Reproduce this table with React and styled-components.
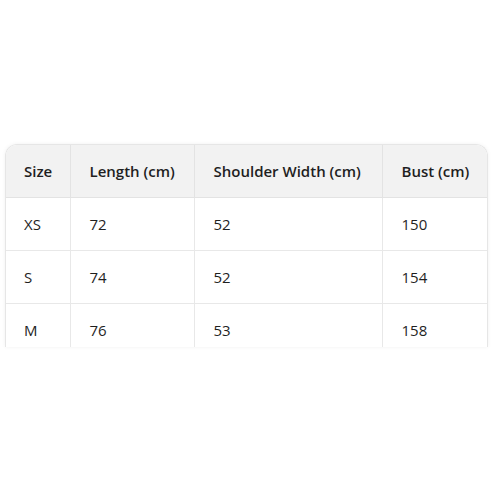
import styled, { createGlobalStyle } from 'styled-components';

const GlobalStyle = createGlobalStyle`
    html, body {
        margin: 0;
        padding: 0;
        background: #ffffff;
        font-family: 'Open Sans', 'Noto Sans', sans-serif;
    }
`;

// Styles
const Page = styled.div`
    width: 491px;
    height: 491px;
    padding: 144px 3px 0 5px;
    box-sizing: border-box;
`;

const TableWrap = styled.div`
    height: 202px;
    overflow: hidden;
    border: 1px solid #e6e6e6;
    border-bottom: none;
    border-radius: 12px 12px 0 0;
    box-shadow: 0 0 4px rgba(0, 0, 0, 0.06);
`;

const Table = styled.table`
    width: 100%;
    border-collapse: collapse;
    table-layout: fixed;
    color: #1f1f1f;
    font-size: 15px;
`;

const HeadCell = styled.th`
    width: ${props => props.w}px;
    height: 52px;
    padding: 0 12px 0 19px;
    text-align: left;
    font-weight: 600;
    background: #f2f2f2;
    border-bottom: 1px solid #e3e3e3;
    border-left: 1px solid #e3e3e3;
    box-sizing: border-box;
    white-space: nowrap;

    &:first-child {
        border-left: none;
        padding-left: 18px;
    }
`;

const Cell = styled.td`
    height: 52px;
    padding: 0 12px 0 19px;
    font-weight: 400;
    border-bottom: 1px solid #e8e8e8;
    border-left: 1px solid #e8e8e8;

    &:first-child {
        border-left: none;
        padding-left: 18px;
    }
`;

const columns = [
    { label: 'Size', w: 64 },
    { label: 'Length (cm)', w: 124 },
    { label: 'Shoulder Width (cm)', w: 188 },
    { label: 'Bust (cm)', w: 105 },
];

const rows = [
    ['XS', '72', '52', '150'],
    ['S', '74', '52', '154'],
    ['M', '76', '53', '158'],
];

export default function App() {
    return (
        <Page>
            <GlobalStyle />
            <TableWrap>
                <Table>
                    <thead>
                        <tr>
                            {columns.map(c => (
                                <HeadCell key={c.label} w={c.w}>{c.label}</HeadCell>
                            ))}
                        </tr>
                    </thead>
                    <tbody>
                        {rows.map(r => (
                            <tr key={r[0]}>
                                {r.map((v, i) => <Cell key={i}>{v}</Cell>)}
                            </tr>
                        ))}
                    </tbody>
                </Table>
            </TableWrap>
        </Page>
    )
}
